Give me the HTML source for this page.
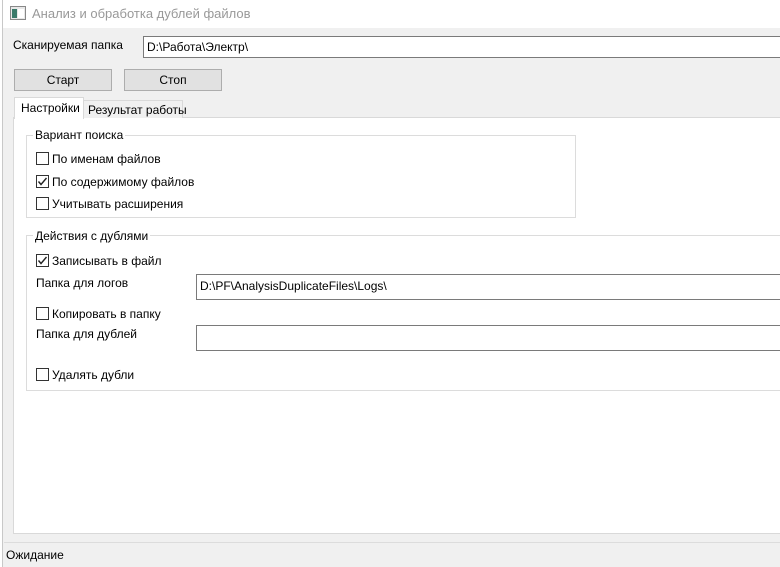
<!DOCTYPE html>
<html><head><meta charset="utf-8"><style>
*{margin:0;padding:0;box-sizing:border-box}
body{width:780px;height:567px;overflow:hidden;background:#f0f0f0;font-family:"Liberation Sans","DejaVu Sans",sans-serif;font-size:12px;color:#000;position:relative}
.a{position:absolute;white-space:nowrap}
.tb{background:#fff;border:1px solid #7a7a7a}
.btn{background:#e1e1e1;border:1px solid #adadad;text-align:center;line-height:20px}
.cb{width:13px;height:13px;border:1px solid #333;background:#fff}
.grp{border:1px solid #dcdcdc}
.leg{background:#fff;padding:0 2px}
</style></head><body>
<div class="a" style="left:0;top:0;width:780px;height:28px;background:#fff"></div>
<div class="a" style="left:0;top:0;width:3px;height:567px;background:#fff;border-right:1px solid #c8c8c8"></div>
<svg class="a" style="left:10px;top:6px" width="16" height="14"><rect x="0.5" y="0.5" width="15" height="13" fill="#e8e8e8" stroke="#888"/><rect x="2" y="3" width="5" height="9" fill="#3a7a6a"/><rect x="8" y="3" width="6" height="9" fill="#fff"/></svg>
<div class="a" style="left:32px;top:6px;font-size:13px;color:#999">Анализ и обработка дублей файлов</div>
<div class="a" style="left:13px;top:38px">Сканируемая папка</div>
<div class="a tb" style="left:143px;top:36px;width:640px;height:22px;padding:3px 3px">D:\Работа\Электр\</div>
<div class="a btn" style="left:14px;top:69px;width:98px;height:22px">Старт</div>
<div class="a btn" style="left:124px;top:69px;width:98px;height:22px">Стоп</div>
<div class="a" style="left:13px;top:117px;width:770px;height:417px;background:#fff;border:1px solid #d9d9d9"></div>
<div class="a" style="left:83px;top:100px;width:100px;height:18px;background:#f0f0f0;border:1px solid #d9d9d9;border-bottom:none;padding:2px 4px">Результат работы</div>
<div class="a" style="left:14px;top:97px;width:70px;height:22px;background:#fff;border:1px solid #d9d9d9;border-bottom:none;padding:3px 6px">Настройки</div>
<div class="a grp" style="left:26px;top:135px;width:550px;height:83px"></div>
<div class="a leg" style="left:33px;top:128px">Вариант поиска</div>
<div class="a cb" style="left:36px;top:152px"></div><div class="a" style="left:52px;top:152px">По именам файлов</div>
<div class="a cb" style="left:36px;top:175px"></div><div class="a" style="left:52px;top:175px">По содержимому файлов</div>
<svg class="a" style="left:37px;top:176px" width="11" height="11"><path d="M1.5 5.5 L4 8.5 L9.5 2" stroke="#222" stroke-width="1.4" fill="none"/></svg>
<div class="a cb" style="left:36px;top:197px"></div><div class="a" style="left:52px;top:197px">Учитывать расширения</div>
<div class="a grp" style="left:26px;top:235px;width:760px;height:156px"></div>
<div class="a leg" style="left:33px;top:229px">Действия с дублями</div>
<div class="a cb" style="left:36px;top:254px"></div><div class="a" style="left:52px;top:254px">Записывать в файл</div>
<svg class="a" style="left:37px;top:255px" width="11" height="11"><path d="M1.5 5.5 L4 8.5 L9.5 2" stroke="#222" stroke-width="1.4" fill="none"/></svg>
<div class="a" style="left:36px;top:276px">Папка для логов</div>
<div class="a tb" style="left:196px;top:274px;width:590px;height:26px;padding:4px 3px">D:\PF\AnalysisDuplicateFiles\Logs\</div>
<div class="a cb" style="left:36px;top:307px"></div><div class="a" style="left:52px;top:307px">Копировать в папку</div>
<div class="a" style="left:36px;top:327px">Папка для дублей</div>
<div class="a tb" style="left:196px;top:325px;width:590px;height:26px"></div>
<div class="a cb" style="left:36px;top:368px"></div><div class="a" style="left:52px;top:368px">Удалять дубли</div>
<div class="a" style="left:4px;top:542px;width:776px;height:1px;background:#dcdcdc"></div>
<div class="a" style="left:6px;top:548px">Ожидание</div>
</body></html>
